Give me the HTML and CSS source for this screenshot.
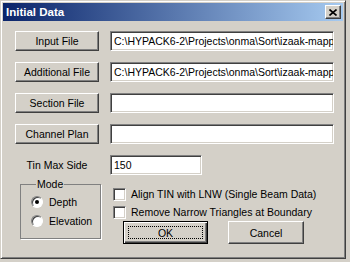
FILE: index.html
```html
<!DOCTYPE html>
<html lang="en">
<head>
  <meta charset="UTF-8">
  <title>Initial Data</title>
  <link rel="stylesheet" href="styles.css">
</head>
<body>
  <div class="window">
    <div class="titlebar">
      <span class="title">Initial Data</span>
      <span class="close-btn">
        <svg width="8" height="7" viewBox="0 0 8 7"><path d="M0.5 0.5 L7.5 6.5 M7.5 0.5 L0.5 6.5" stroke="#000" stroke-width="1.6"/></svg>
      </span>
    </div>

    <div class="form-grid">
      <button class="btn file-btn">Input File</button>
      <div class="field">C:\HYPACK6-2\Projects\onma\Sort\izaak-mapp</div>

      <button class="btn file-btn">Additional File</button>
      <div class="field">C:\HYPACK6-2\Projects\onma\Sort\izaak-mapp</div>

      <button class="btn file-btn">Section File</button>
      <div class="field"></div>

      <button class="btn file-btn">Channel Plan</button>
      <div class="field"></div>

      <span class="label">Tin Max Side</span>
      <div class="field short">150</div>
    </div>

    <div class="bottom">
      <fieldset class="mode">
        <legend>Mode</legend>
        <div class="radio-row"><span class="radio checked"></span>Depth</div>
        <div class="radio-row"><span class="radio"></span>Elevation</div>
      </fieldset>

      <div class="options">
        <div class="check-row"><span class="check"></span>Align TIN with LNW (Single Beam Data)</div>
        <div class="check-row"><span class="check"></span>Remove Narrow Triangles at Boundary</div>
        <div class="actions">
          <button class="btn default-btn"><span class="focus">OK</span></button>
          <button class="btn cancel-btn">Cancel</button>
        </div>
      </div>
    </div>
  </div>
</body>
</html>
```

FILE: styles.css
```css
body {
  margin: 0;
  background: #d4d0c8;
  font-family: "Liberation Sans", Arial, sans-serif;
  font-size: 10.5px;
  color: #000;
}
.window {
  box-sizing: border-box;
  width: 346px;
  height: 259px;
  background: #d4d0c8;
  border: 1px solid;
  border-color: #d4d0c8 #404040 #404040 #d4d0c8;
  box-shadow: inset 1px 1px #fff, inset -1px -1px #808080;
  padding: 2px;
}
.titlebar {
  height: 18px;
  display: flex;
  align-items: center;
  justify-content: space-between;
  padding: 0 2px 0 3px;
  background: linear-gradient(to right, #0a246a, #a6caf0);
}
.title {
  color: #fff;
  font-weight: bold;
  font-size: 11.5px;
}
.close-btn {
  box-sizing: border-box;
  width: 16px;
  height: 14px;
  display: flex;
  align-items: center;
  justify-content: center;
  background: #d4d0c8;
  border: 1px solid;
  border-color: #fff #404040 #404040 #fff;
  box-shadow: inset -1px -1px #808080;
}
.form-grid {
  display: grid;
  grid-template-columns: 84px 224px;
  grid-auto-rows: 20px;
  column-gap: 11px;
  row-gap: 11px;
  margin: 10px 0 0 12px;
  align-items: center;
}
.btn {
  box-sizing: border-box;
  font-family: inherit;
  font-size: 10.5px;
  color: #000;
  background: #d4d0c8;
  border: 1px solid;
  border-color: #fff #404040 #404040 #fff;
  box-shadow: inset -1px -1px #808080;
  padding: 0;
  margin: 0;
}
.file-btn {
  height: 20px;
}
.field {
  box-sizing: border-box;
  height: 20px;
  background: #fff;
  border: 1px solid;
  border-color: #808080 #fff #fff #808080;
  box-shadow: inset 1px 1px #404040, inset -1px -1px #d4d0c8;
  padding: 3px 0 0 3px;
  white-space: nowrap;
  overflow: hidden;
}
.field.short {
  width: 92px;
}
.label {
  text-align: center;
}
.bottom {
  display: flex;
  margin: 3px 0 0 17px;
}
.mode {
  box-sizing: border-box;
  width: 81px;
  height: 61px;
  margin: 0;
  padding: 2px 0 0 10px;
  border: 1px solid #808080;
  box-shadow: 1px 1px #fff;
}
.mode legend {
  padding: 0 1px;
  margin-left: 5px;
}
.radio-row {
  display: flex;
  align-items: center;
  gap: 6px;
  height: 19px;
}
.radio {
  box-sizing: border-box;
  width: 12px;
  height: 12px;
  border-radius: 50%;
  background: #fff;
  border: 1px solid;
  border-color: #808080 #fff #fff #808080;
  box-shadow: inset 1px 1px #404040;
  display: flex;
  align-items: center;
  justify-content: center;
}
.radio.checked::after {
  content: "";
  width: 4px;
  height: 4px;
  border-radius: 50%;
  background: #000;
}
.options {
  margin: 7px 0 0 12px;
}
.check-row {
  display: flex;
  align-items: center;
  gap: 5px;
  height: 18px;
}
.check {
  box-sizing: border-box;
  width: 13px;
  height: 13px;
  background: #fff;
  border: 1px solid;
  border-color: #808080 #fff #fff #808080;
  box-shadow: inset 1px 1px #404040, inset -1px -1px #d4d0c8;
}
.actions {
  display: flex;
  gap: 20px;
  margin: 0 0 0 10px;
}
.default-btn {
  width: 85px;
  height: 23px;
  border: 1px solid #000;
  box-shadow: inset 1px 1px #fff, inset -1px -1px #404040, inset -2px -2px #808080;
  padding: 4px;
}
.focus {
  display: flex;
  align-items: center;
  justify-content: center;
  height: 100%;
  border: 1px dotted #000;
  box-sizing: border-box;
}
.cancel-btn {
  width: 76px;
  height: 23px;
}
```
